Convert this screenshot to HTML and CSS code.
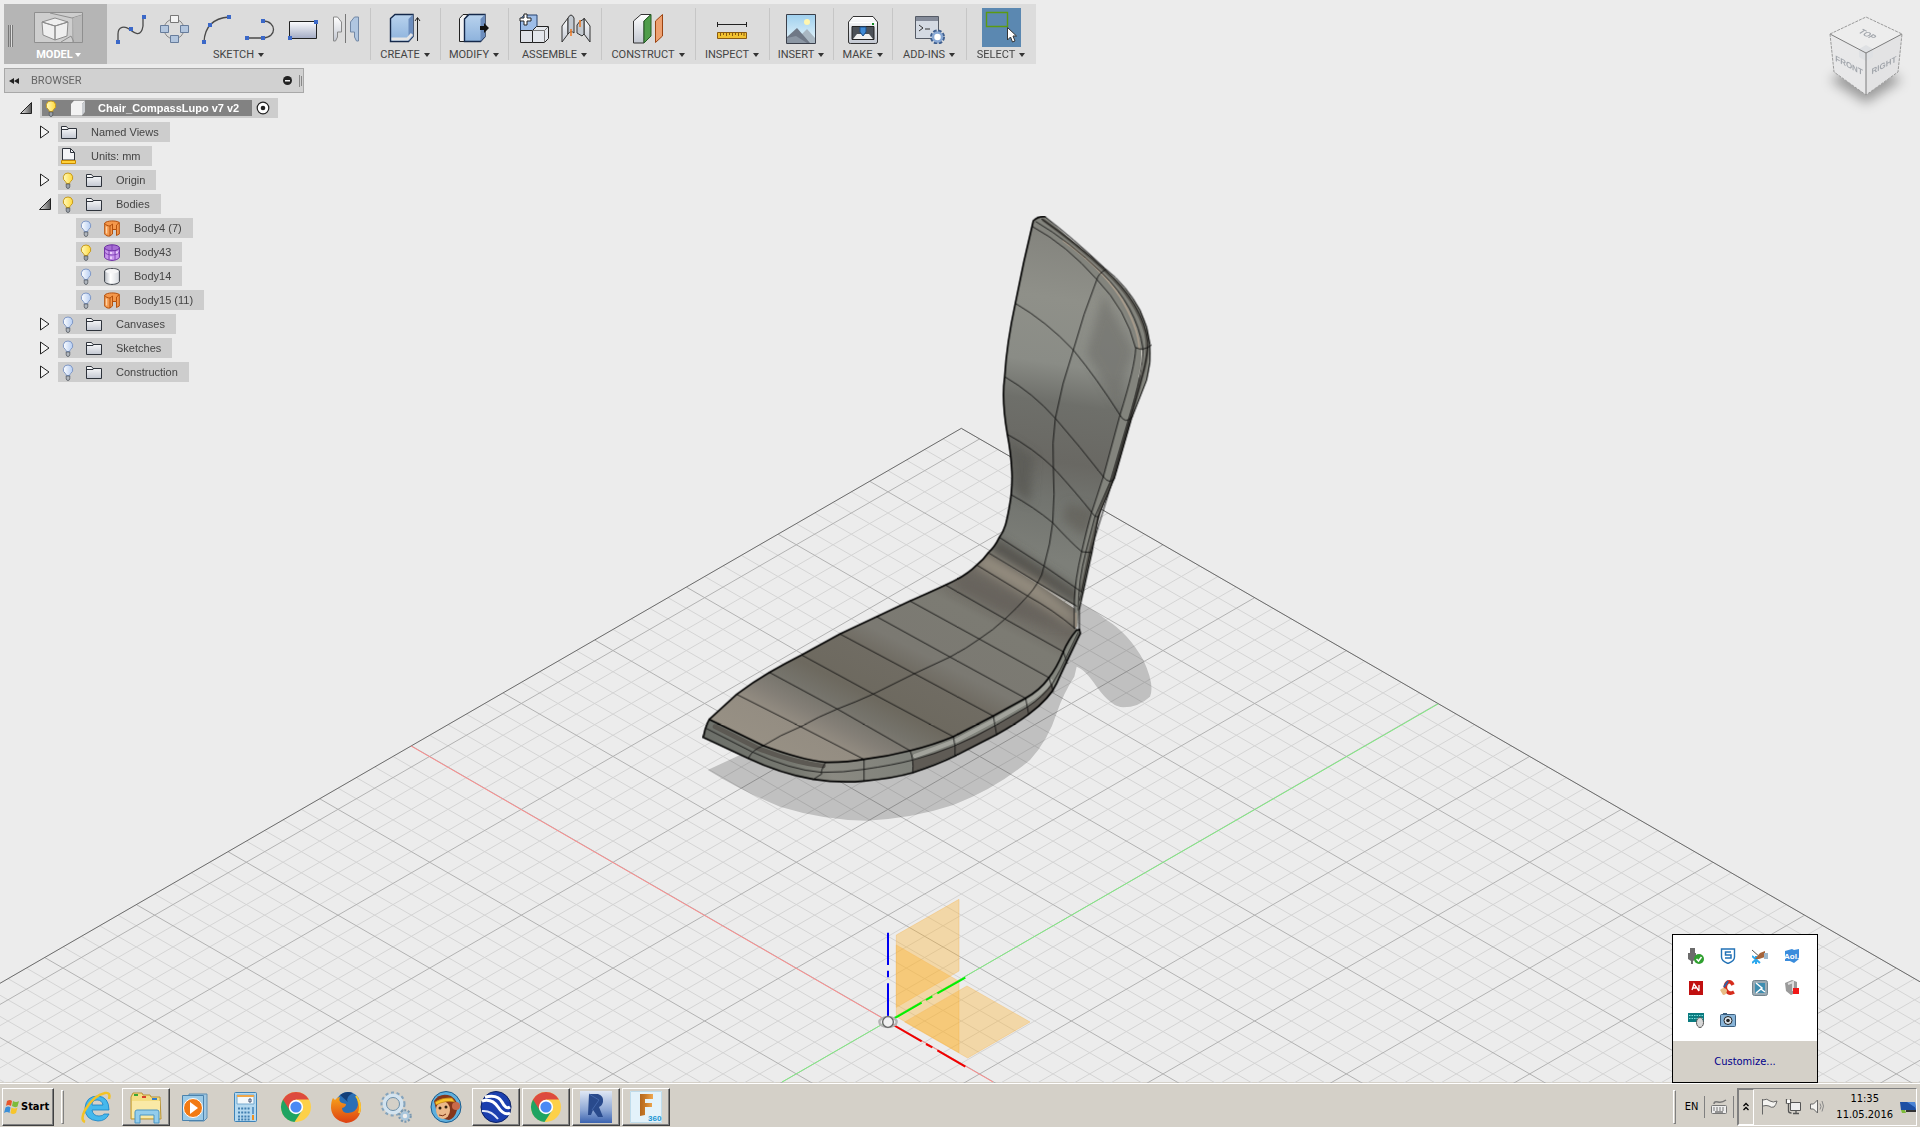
FILE: index.html
```html
<!DOCTYPE html>
<html lang="en">
<head>
<meta charset="utf-8">
<title>Chair_CompassLupo v7 v2</title>
<link rel="stylesheet" href="styles.css">
</head>
<body>
<svg class="defs" width="0" height="0" aria-hidden="true">
  <defs>
    <linearGradient id="gYellow" x1="0" x2="1"><stop offset="0" stop-color="#fffbc0"/><stop offset="1" stop-color="#ffd83a"/></linearGradient>
    <linearGradient id="gBlueBulb" x1="0" x2="1"><stop offset="0" stop-color="#ffffff"/><stop offset="1" stop-color="#b4ccf2"/></linearGradient>
    <linearGradient id="gSilver" x1="0" y1="0" x2="0" y2="1"><stop offset="0" stop-color="#ffffff"/><stop offset="1" stop-color="#c3c8d2"/></linearGradient>
    <linearGradient id="gRect" x1="0" y1="0" x2="0" y2="1"><stop offset="0" stop-color="#fdfdff"/><stop offset="1" stop-color="#a3abc4"/></linearGradient>
    <linearGradient id="gBlue" x1="0" y1="0" x2="0" y2="1"><stop offset="0" stop-color="#b9d3ee"/><stop offset="1" stop-color="#8db2dc"/></linearGradient>
    <linearGradient id="gSky" x1="0" y1="0" x2="0" y2="1"><stop offset="0" stop-color="#9fd0ee"/><stop offset="1" stop-color="#e8f6fb"/></linearGradient>
    <linearGradient id="gCyl" x1="0" x2="1"><stop offset="0" stop-color="#b9bdc4"/><stop offset=".4" stop-color="#fff"/><stop offset="1" stop-color="#d5d8dd"/></linearGradient>
    <linearGradient id="gTri" x1="0" x2="1"><stop offset="0" stop-color="#eee"/><stop offset="1" stop-color="#555"/></linearGradient>
    <linearGradient id="gFox" x1="0" y1="0" x2="0" y2="1"><stop offset="0" stop-color="#f7a21b"/><stop offset="1" stop-color="#dd3f12"/></linearGradient>
    <linearGradient id="gRevit" x1="0" y1="0" x2="0" y2="1"><stop offset="0" stop-color="#dfe7f4"/><stop offset=".6" stop-color="#8ca6d4"/><stop offset="1" stop-color="#3b63b0"/></linearGradient>
    <linearGradient id="gFus" x1="0" x2="1"><stop offset="0" stop-color="#b5681e"/><stop offset=".4" stop-color="#c87a28"/><stop offset="1" stop-color="#f0a850"/></linearGradient>
    <symbol id="bulbOn" viewBox="0 0 12 17"><path d="M6 1a4.600 4.600 0 0 0-2.600 8.500C4 10.200 4.200 10.600 4.200 11.500h3.600c0-.9.2-1.300.8-2A4.600 4.600 0 0 0 6 1z" fill="url(#gYellow)" stroke="#c79a1c"/><path d="M4.200 12h3.600v3L7 16.300H5L4.200 15z" fill="#9aa0a8" stroke="#4a5058" stroke-width=".7"/></symbol>
    <symbol id="bulbOff" viewBox="0 0 12 17"><path d="M6 1a4.600 4.600 0 0 0-2.600 8.500C4 10.200 4.200 10.600 4.200 11.500h3.600c0-.9.2-1.300.8-2A4.600 4.600 0 0 0 6 1z" fill="url(#gBlueBulb)" stroke="#7f98c6"/><path d="M4.200 12h3.600v3L7 16.300H5L4.200 15z" fill="#b0b6be" stroke="#4a5058" stroke-width=".7"/></symbol>
    <symbol id="folder" viewBox="0 0 16 14"><path d="M.5 13.500V1.500h5l1.500 2h8.500v10z" fill="url(#gSilver)" stroke="#2e333b"/><path d="M1 4.500h6l1-1" fill="none" stroke="#2e333b"/></symbol>
    <symbol id="surface" viewBox="0 0 16 17"><path d="M.7 3C3 .5 12 .2 15.300 2.500V14l-2.800 1.500V9.500H8.500V14l-2.500 2C4 16.500 1.500 15.500.7 14z" fill="#f4984c" stroke="#b4500c"/><path d="M6 16V6L8.500 4v6M12.500 9.500V5l2.800-2.500M.7 3.500C1.700 5 3.700 6 6 6" fill="none" stroke="#b4500c"/><path d="M2.500 6.500v7" stroke="#fcd0a4" stroke-width="1.500"/></symbol>
    <symbol id="tspline" viewBox="0 0 16 17"><path d="M.6 3.800v9.400C1 15 5 16.400 8 16.400s7-1.400 7.400-3.200V3.800z" fill="#c896ec" stroke="#6a2ba0"/><ellipse cx="8" cy="3.800" rx="7.400" ry="3" fill="#a76fd4" stroke="#6a2ba0"/><path d="M5 6.600v9.300M11 6.600v9.300M8 1v6M.6 8c1 2 4 3 7.400 3s6.400-1 7.400-3" fill="none" stroke="#7a3bb2" stroke-width=".9"/><path d="M7 8v2M7 12.500v2.500M13 7.500v2" stroke="#f2e0fd" stroke-width="1.500"/></symbol>
    <symbol id="cyl" viewBox="0 0 16 17"><path d="M.6 3v10.500C1 15 4 16.400 8 16.400s7-1.400 7.400-2.900V3C15 1.500 12 .6 8 .6S1 1.500.6 3z" fill="url(#gCyl)" stroke="#3a3f47"/><ellipse cx="8" cy="3.300" rx="6.600" ry="2.200" fill="#f6f6f7"/></symbol>
    <symbol id="chrome" viewBox="0 0 32 32"><circle cx="16" cy="16" r="15" fill="#fdd048"/><path d="M3 8.500A15 15 0 0 0 14.500 31L22 19.500 16 16z" fill="#1fa463"/><path d="M3 8.500A15 15 0 0 1 29 8.500H16L9.500 19z" fill="#dd4b3e"/><circle cx="16" cy="16" r="7.200" fill="#fff"/><circle cx="16" cy="16" r="5.600" fill="#4a8af4"/></symbol>
  </defs>
</svg>

<div class="app">
  <main class="workspace">
    <svg class="scene" viewBox="0 0 1920 1083" preserveAspectRatio="xMidYMid slice" role="img" aria-label="Chair model on the ground grid">
      <defs>
        <clipPath id="ground"><path id="groundShape"/></clipPath>
        <filter id="soft" x="-30%" y="-30%" width="160%" height="160%"><feGaussianBlur stdDeviation="14"/></filter>
        <filter id="softS"><feGaussianBlur stdDeviation="2"/></filter>
        <filter id="cubeBlur" x="-50%" y="-50%" width="200%" height="200%"><feGaussianBlur stdDeviation="6"/></filter>
        <linearGradient id="gBack" gradientUnits="userSpaceOnUse" x1="1140" y1="-800" x2="1000" y2="160">
          <stop offset="0" stop-color="#84847e"/><stop offset=".2" stop-color="#8f9089"/><stop offset=".4" stop-color="#8a8c86"/><stop offset=".52" stop-color="#6e6f6a"/><stop offset=".7" stop-color="#696863"/><stop offset=".82" stop-color="#72746f"/><stop offset="1" stop-color="#7d7f79"/>
        </linearGradient>
        <linearGradient id="gSeat" gradientUnits="userSpaceOnUse" x1="88" y1="658" x2="444" y2="-36">
          <stop offset="0" stop-color="#979084"/><stop offset=".13" stop-color="#948d82"/><stop offset=".2" stop-color="#847f77"/><stop offset=".28" stop-color="#75736b"/><stop offset=".36" stop-color="#6d695f"/><stop offset=".52" stop-color="#706c63"/><stop offset=".6" stop-color="#7b7972"/><stop offset=".82" stop-color="#7c7b73"/><stop offset=".92" stop-color="#6c6861"/><stop offset="1" stop-color="#6c6861"/>
        </linearGradient>
        <linearGradient id="gRim" gradientUnits="userSpaceOnUse" x1="80" y1="700" x2="1190" y2="450">
          <stop offset="0" stop-color="#6d706a"/><stop offset=".2" stop-color="#767870"/><stop offset=".3" stop-color="#8b8a82"/><stop offset=".5" stop-color="#7f817a"/><stop offset="1" stop-color="#85877f"/>
        </linearGradient>
        <clipPath id="chairClip"><path d="M1060-838Q1030-715 1006-590Q980-470 974-370Q964-300 982-197Q995-130 996-70Q996-20 988 20C980 65 975 90 958 112Q945 140 925 158Q910 180 890 195C860 225 830 240 800 253C760 272 730 285 690 303L590 350L480 402L365 465Q320 488 268 517Q220 545 170 583L88 658L552 778L1000 620L1185 385L1198 330L1236 158L1255 50L1305-70L1355-245L1400-360Q1430-470 1380-570Q1340-640 1275-690L1095-850z"/></clipPath>
      </defs>
      <g clip-path="url(#ground)" fill="none">
        <path id="minor" stroke="#d4d4d4"/>
        <path id="major" stroke="#b2b2b2"/>
      </g>
      <path id="groundEdge" fill="none" stroke="#6c6c6c"/>
      <path d="M411 746 993 1082" stroke="#ff8c8c" fill="none"/>
      <path d="M1438 704 782 1082" stroke="#80ee80" fill="none"/>

      <g transform="translate(680 500) scale(.33333)" fill="none" stroke="#0c0c0c" stroke-width="3" stroke-linejoin="round" stroke-linecap="round">
        <path filter="url(#softS)" fill="#000" fill-opacity=".19" stroke="none" d="M83 810Q190 876 300 920Q430 960 560 962Q700 955 820 915Q950 865 1050 780Q1105 720 1130 640Q1150 580 1183 530L1190 500Q1215 508 1250 560Q1295 622 1330 622Q1375 622 1410 590Q1425 555 1390 480Q1345 400 1280 360Q1250 335 1205 312L900 500L180 765z"/>
        <!-- seat rim -->
        <path fill="url(#gRim)" stroke="none" d="M88 658Q75 680 70 712L205 775Q300 820 400 838Q480 850 552 843Q640 835 698 818Q770 795 825 768L948 705Q1010 670 1046 643Q1110 595 1130 550Q1150 505 1201 400L1190 385L900 600L500 720z"/>
        <path stroke="#5c5953" stroke-width="14" d="M105 680L240 748Q350 790 430 798"/>
        <path stroke="#a2a39c" stroke-width="12" d="M705 768Q770 745 828 722L945 660L1040 606Q1085 580 1112 542"/>
        <path fill="#5f5b55" stroke="none" d="M698 782L698 816Q830 770 948 703Q1085 630 1120 570L1118 550Q1080 595 1043 620L948 675L822 738z"/>
        <!-- seat and back surface -->
        <path fill="url(#gSeat)" stroke="none" d="M88 658L170 583Q220 545 268 517Q320 488 365 465L480 402L590 350L690 303L800 253C830 240 860 225 890 195L925 158L1190 330L1187 388Q1165 420 1150 455Q1130 505 1105 535Q1080 570 1035 595L940 648L820 710Q760 735 690 752Q620 770 552 778Q500 788 435 787Q360 778 250 737z"/>
        <path fill="url(#gBack)" stroke="none" d="M1060-838Q1030-715 1006-590Q980-470 974-370Q964-300 982-197Q995-130 996-70Q996-20 988 20C980 65 975 90 958 112Q945 140 925 158L1185 318L1198 330L1210 280L1236 158L1255 50L1305-70L1355-245L1400-360Q1430-470 1380-570Q1340-640 1275-690L1095-850Q1075-852 1060-838z"/>
        <g clip-path="url(#chairClip)"><g stroke="none" filter="url(#soft)">
          <path fill="#57544f" d="M950 110L1090 200L1200 275V320L1075 245L925 150z"/>
          <path fill="#938b7e" d="M915 158L1075 250L1180 340L1185 378L1043 288L880 192z"/>
          <path fill="#68645d" d="M850 220L1000 290L1160 375L1100 370L960 330L820 260z"/>
          <path fill="#5d5d58" d="M985-180L1060-130L1050 10L1000-30z"/>
          <path fill="#6e6e69" d="M1270-620L1360-450L1310-290L1220-440z" opacity=".6"/>
          <path fill="#62605a" d="M1160 10L1250 30L1215 110L1150 60z" opacity=".7"/>
        </g></g>
        <!-- back rim -->
        <path fill="#83847d" stroke="none" d="M1060-838L1140-770L1250-662Q1370-540 1367-440Q1350-360 1320-255L1270-70L1240 20L1205 155Q1183 250 1183 385L1192 380L1205 280L1236 158L1255 50L1305-70L1355-245L1400-360Q1430-470 1380-570Q1340-640 1275-690L1095-850z"/>
        <path stroke="#55534d" stroke-width="8" d="M1090-840Q1200-760 1275-688Q1370-600 1397-500Q1410-440 1385-370L1350-243L1299-66L1259 35L1230 150L1205 270"/>
        <path stroke="#ad9f8e" stroke-width="5" d="M1150-778Q1260-700 1320-610Q1375-520 1378-455M1187 340V380"/>
        <path stroke="#e2dfd6" stroke-width="4" d="M1386-448Q1387-400 1378-370"/>
        <!-- mesh -->
        <path stroke-width="2.500" d="M170 583L362 680L552 778M268 517L472 627L690 752M365 465L580 582L820 710M480 402L703 521L940 648M590 350L810 471L1037 595M690 303L898 417L1107 533M800 257L975 357L1150 455M890 195L1043 288Q1120 330 1185 385M925 158L1073 248L1190 318M958 112L1092 198L1208 278M995-15Q1060 20 1118 68Q1170 125 1205 155L1236 158
          M1006-590Q1100-535 1180-450Q1250-365 1320-255Q1335-225 1358-250M974-370Q1060-320 1126-245Q1200-160 1270-70Q1288-45 1305-65M982-197Q1060-155 1120-97Q1190-20 1235 37Q1245 53 1255 50
          M250 737Q300 705 362 680Q415 650 472 627Q530 605 580 582L703 521L810 471Q860 445 898 417Q940 390 975 357Q1010 325 1043 288Q1060 270 1073 248Q1088 225 1092 198Q1112 130 1118 68Q1125-20 1120-97Q1115-170 1126-245Q1145-350 1180-450Q1210-560 1250-660Q1255-680 1275-690"/>
        <path stroke-width="2.500" d="M1058-820Q1160-765 1250-662Q1340-570 1367-455Q1365-400 1320-255L1270-70L1235 37Q1222 80 1205 155Q1185 240 1183 300V385
          M1068-835Q1170-775 1265-682Q1370-580 1389-455Q1390-385 1345-240L1290-53L1245 50L1218 155Q1195 240 1195 330
          M1085-843Q1190-770 1270-695Q1390-590 1405-470Q1400-400 1350-240L1300-65L1232 155L1200 300
          M1367-457Q1390-445 1415-465"/>
        <path stroke-width="2.500" d="M78 685L215 755Q330 810 425 817Q490 818 552 808Q640 795 698 780Q765 762 822 738Q890 710 948 675L1043 620Q1090 590 1118 550Q1145 505 1160 470L1195 397M250 737Q215 750 205 775M437 787Q420 815 425 822L400 838M552 778V843M690 752Q702 775 698 818M820 710Q828 740 825 768M940 648L950 705M1037 595L1046 643M1107 533L1120 575M1150 455L1162 490"/>
        <path stroke="#000" stroke-width="5" d="M88 658L250 737Q360 778 435 787Q500 788 552 778Q620 770 690 752Q760 735 820 710L940 648L1035 595Q1080 570 1105 535Q1130 505 1150 455Q1165 420 1190 390H1198"/>
        <path stroke="#000" stroke-width="5" d="M1095-850Q1075-852 1060-838Q1030-715 1006-590Q980-470 974-370Q964-300 982-197Q995-130 996-70Q996-20 988 20C980 65 975 90 958 112Q945 140 925 158Q910 180 890 195C860 225 830 240 800 253C760 272 730 285 690 303L590 350L480 402L365 465Q320 488 268 517Q220 545 170 583L88 658Q75 680 70 712L205 775Q300 820 400 838Q480 850 552 843Q640 835 698 818Q770 795 825 768L948 705Q1010 670 1046 643Q1110 595 1130 550Q1150 505 1201 400L1198 388"/>
        <path stroke-width="3" d="M1198 388V330L1236 158L1255 50L1305-70L1355-245L1400-360Q1430-470 1380-570Q1340-645 1275-695Q1180-785 1095-850"/>
      </g>

      <g transform="translate(860 880) scale(.33333)">
        <g fill="#ffae1a" fill-opacity=".33" stroke="#f5b95a" stroke-opacity=".6" stroke-width="2">
          <path d="M109 165 297 58V273L109 382z"/><path d="M109 195 297 304V518L109 410z"/><path d="M134 426 321 318 510 426 323 534z"/>
        </g>
        <g fill="none" stroke-width="6">
          <path stroke="#0000f0" d="M84 158v97M84 272v20M84 310v100"/>
          <path stroke="#00f000" d="M100 417 185 368M198 360l19-11M232 340l84-47"/>
          <path stroke="#f00000" d="M100 435l85 49M198 492l19 10M232 511l84 49"/>
        </g>
        <ellipse cx="84" cy="426" rx="26" ry="15" fill="none" stroke="#b4b4b4" stroke-width="7"/>
        <circle cx="84" cy="426" r="16" fill="#f1f1f1" stroke="#666" stroke-width="4"/>
      </g>
    </svg>

    <div class="overlay">
      <nav class="toolbar" aria-label="Tools">
        <button class="tool model">
          <svg class="grip" width="6" height="22" viewBox="0 0 6 22"><path d="M.5 0v22M2.500 0v22M4.500 0v22" stroke="#777"/><path d="M3.500 0v22" stroke="#ddd"/></svg>
          <span class="icons"><svg width="49" height="31" viewBox="0 0 49 31"><path d="M.5.5h48v30H.5z" fill="#cecece" stroke="#8f8f8f"/><path d="M16 1l22 5 10-3M39 6v24M27 30l10-6 3 6" fill="none" stroke="#8f8f8f"/><path d="M39 6l9-3v27h-8z" fill="#b9b9b9"/><path d="M8 10 21 14V28L9 23zM21 14 34 10 33 24 21 28zM8 10 21 6 34 10 21 14z" fill="#efefef" stroke="#8c8c8c"/></svg></span>
          <span class="label">MODEL<i class="caret"></i></span>
        </button>
        <button class="tool">
          <span class="icons wide">
            <svg width="32" height="32" viewBox="0 0 32 32"><path d="M3 30V22C3 14 10 14 14 17s12 10 14-3V5" fill="none" stroke="#4a4a4a" stroke-width="1.300"/><path d="M1 28h4v4H1zM14 15h4v4h-4zM27 3h4v4h-4z" fill="#3b68c8"/></svg>
            <svg width="32" height="32" viewBox="0 0 32 32"><circle cx="16" cy="17" r="10" fill="none" stroke="#888"/><g fill="#b3c6de" stroke="#677c9b"><path d="M12.500 23.500h8v7h-8z"/><path d="M2.500 13.500h8v7h-8z"/><path d="M22.500 13.500h8v7h-8z"/></g><path d="M12.500 3.500h8v7h-8z" fill="#f3f3f3" stroke="#777"/></svg>
            <svg width="32" height="32" viewBox="0 0 32 32"><path d="M3 30Q4 7 28 5" fill="none" stroke="#4a4a4a" stroke-width="1.300"/><path d="M1 28h4v4H1zM7 11h4v4H7zM26 3h4v4h-4z" fill="#3b68c8"/></svg>
            <svg width="32" height="32" viewBox="0 0 32 32"><path d="M3 26h16C33 26 33 9 19 9" fill="none" stroke="#4a4a4a" stroke-width="1.300"/><path d="M1 24h4v4H1zM17 24h4v4h-4zM17 7h4v4h-4z" fill="#3b68c8"/></svg>
            <svg width="32" height="32" viewBox="0 0 32 32"><path d="M2.500 9.500h27v17h-27z" fill="url(#gRect)" stroke="#222"/><path d="M1 24h4v4H1zM27 8h4v4h-4z" fill="#3b68c8"/></svg>
            <svg width="32" height="32" viewBox="0 0 32 32"><path d="M3.500 5h4l4 5v10h-4v5l-2 4h-2z" fill="url(#gSilver)" stroke="#888"/><path d="M28.500 5h-4l-4 5v10h4v5l2 4h2z" fill="#b0c6e0" stroke="#7288a6"/><path d="M15.500 2v29" stroke="#777"/></svg>
          </span>
          <span class="label">SKETCH<i class="caret"></i></span>
        </button>
        <button class="tool">
          <span class="icons"><svg width="32" height="32" viewBox="0 0 32 32"><path d="M1.500 6.500 6 2.500h18v22l-4.500 5h-18z" fill="url(#gBlue)" stroke="#14284a" stroke-width="1.400"/><path d="M19.500 7 24 2.500v22l-4.500 5z" fill="#6c8dbd"/><path d="M2.500 27h16l4.500-5" fill="none" stroke="#e5e5e5" stroke-width="3"/><path d="M28.500 29V6M26 9l2.500-3.500L31 9" fill="none" stroke="#222"/></svg></span>
          <span class="label">CREATE<i class="caret"></i></span>
        </button>
        <button class="tool">
          <span class="icons"><svg width="32" height="32" viewBox="0 0 32 32"><path d="M1.500 6.500 5 2.500h5L6.500 7v22.500h-5z" fill="#f2f2f2" stroke="#222"/><path d="M6.500 7 11 2.500h16v22l-4.500 5h-16z" fill="url(#gBlue)" stroke="#14284a" stroke-width="1.400"/><path d="M22.500 7 27 2.500v22l-4.500 5z" fill="#6c8dbd"/><path d="M22 14h4v-3l5 5-5 5v-3h-4z" fill="#111"/></svg></span>
          <span class="label">MODIFY<i class="caret"></i></span>
        </button>
        <button class="tool">
          <span class="icons double">
            <svg width="32" height="32" viewBox="0 0 32 32"><path d="M2.500 7 6 3h13v12l-3 4H2.500z" fill="#9dbde8" stroke="#24406e"/><path d="M2.500 18.500h12v12h-12z" fill="#dfe2e8" stroke="#222"/><path d="M14.500 18.500l4-4h12v12l-4 4h-12z" fill="#e4e7ec" stroke="#222"/><path d="M14.500 18.500h12v12M26.500 18.500l4-4" fill="none" stroke="#777"/><path d="M6 2h3v4h4v3H9v4H6V9H2V6h4z" fill="#fff" stroke="#222"/></svg>
            <svg width="32" height="32" viewBox="0 0 32 32"><path d="M2 14 8 6v16l-6 8zM30 14l-6-8v16l6 8z" fill="url(#gSilver)" stroke="#333"/><path d="M8 6q3-6 6 0v15q-3-3-6 1zM24 7q-5 2-7 6v8l5 3 2-2z" fill="#c3c9d0" stroke="#333"/><path d="M11 17v7M20 8v7" stroke="#f07820" stroke-width="1.500"/></svg>
          </span>
          <span class="label">ASSEMBLE<i class="caret"></i></span>
        </button>
        <button class="tool">
          <span class="icons"><svg width="32" height="32" viewBox="0 0 32 32"><path d="M1.500 9 9 2.500h10L12 9v22H1.500z" fill="url(#gSilver)" stroke="#333"/><path d="M12 9 19 2.500V24l-7 7z" fill="#4f9d4a" stroke="#235c22"/><path d="M23.500 9l7-6.500V24l-7 6.500z" fill="#eda070" stroke="#9c4310"/></svg></span>
          <span class="label">CONSTRUCT<i class="caret"></i></span>
        </button>
        <button class="tool">
          <span class="icons"><svg width="32" height="32" viewBox="0 0 32 32"><path d="M2 12.500h28M1.500 10v5M30.500 10v5" stroke="#222"/><path d="M1.500 20.500h29v6h-29z" fill="#f2c230" stroke="#8a5a10"/><path d="M4.500 21v3M7.500 21v2M10.500 21v3M13.500 21v2M16.500 21v3M19.500 21v2M22.500 21v3M25.500 21v2M28 21v3" stroke="#8a5a10"/></svg></span>
          <span class="label">INSPECT<i class="caret"></i></span>
        </button>
        <button class="tool">
          <span class="icons"><svg width="32" height="32" viewBox="0 0 32 32"><path d="M1.500 2.500h29v29h-29z" fill="url(#gSky)"/><path d="M13 26l9-9 8 9v5H13z" fill="#a9b7c2"/><path d="M2 25 12 16l13 15H2z" fill="#6f7886"/><path d="M2 31v-5l9-2 11 7z" fill="#8b96a3"/><circle cx="22" cy="10" r="3" fill="#fff6b0"/><path d="M1.500 2.500h29v29h-29z" fill="none" stroke="#3a3f4a"/></svg></span>
          <span class="label">INSERT<i class="caret"></i></span>
        </button>
        <button class="tool">
          <span class="icons"><svg width="32" height="32" viewBox="0 0 32 32"><path d="M1.500 10 6 4.500h20l4.500 5.500v20q0 1.500-2 1.500H3.500q-2 0-2-1.500z" fill="url(#gSilver)" stroke="#333"/><path d="M2 10.500h28" stroke="#fff"/><path d="M5 14.500h22v13H5z" fill="#4c5158" stroke="#222"/><path d="M6 27l4-5h12l4 5z" fill="#f0f0f0"/><path d="M13 15h6v5l-3 4-3-4z" fill="#3f8ad6" stroke="#1d4e88"/><path d="M25 11h2v2h-2z" fill="#128a22"/></svg></span>
          <span class="label">MAKE<i class="caret"></i></span>
        </button>
        <button class="tool">
          <span class="icons"><svg width="32" height="32" viewBox="0 0 32 32"><path d="M2.500 4.500h23v22h-23z" fill="#d4dae3" stroke="#555b66"/><path d="M3 5h22v4H3z" fill="#848b99"/><path d="M6 13l4 3-4 3M12 17h5" fill="none" stroke="#333"/><circle cx="24.500" cy="25" r="5.500" fill="none" stroke="#3f5f8f" stroke-width="4" stroke-dasharray="3 1.300"/><circle cx="24.500" cy="25" r="4.500" fill="#fff" stroke="#88a8d4" stroke-width="2.500"/></svg></span>
          <span class="label">ADD-INS<i class="caret"></i></span>
        </button>
        <button class="tool">
          <span class="icons"><svg class="pressed" width="39" height="39" viewBox="0 0 39 39"><path d="M4.500 4.500h21v14h-21z" fill="none" stroke="#5c9a12" stroke-width="1.400"/><path d="M25.500 19.500v12.500l3-3 2 5 2.500-1-2-5h3.500z" fill="#fff" stroke="#333"/></svg></span>
          <span class="label">SELECT<i class="caret"></i></span>
        </button>
      </nav>

      <aside class="browser">
        <header class="browser-head">
          <svg width="10" height="6" viewBox="0 0 10 6"><path d="M5 0v6L0 3zM10 0v6L5 3z" fill="#222"/></svg>
          <h2>BROWSER</h2>
          <svg width="9" height="9" viewBox="0 0 9 9"><circle cx="4.500" cy="4.500" r="4.500" fill="#222"/><path d="M2 4h5v1.500H2z" fill="#eee"/></svg>
          <svg width="3" height="12" viewBox="0 0 3 12"><path d="M.5 0v12M2.500 1v10" stroke="#888"/></svg>
        </header>
        <ul class="tree">
          <li class="row root"><svg class="twist" width="12" height="12"><path d="M.5 11.500 11.500.5v11z" fill="url(#gTri)" stroke="#222"/></svg><span class="chip"><span class="picked"><svg width="14" height="17"><use href="#bulbOn"/></svg><svg width="16" height="16" viewBox="0 0 16 16"><path d="M1 4 4 .7h11L12 4v11.500H1z" fill="#f2f2f2"/><path d="M12 4l3-3.300V12l-3 3.500z" fill="#c9ccd0"/></svg><b>Chair_CompassLupo v7 v2</b></span><svg width="14" height="14" viewBox="0 0 14 14"><circle cx="7" cy="7" r="5.800" fill="#fff" stroke="#222" stroke-width="1.200"/><circle cx="7" cy="7" r="2.300" fill="#222"/></svg></span></li>
          <li class="row lv1"><svg class="twist" width="12" height="14"><path d="M1.500 1v12L10 7z" fill="#f4f4f4" stroke="#222"/></svg><span class="chip"><svg width="16" height="14"><use href="#folder"/></svg>Named Views</span></li>
          <li class="row lv1"><i class="twist"></i><span class="chip"><svg width="16" height="16" viewBox="0 0 16 16"><path d="M1.500 12V.5h8l4 4V12z" fill="#f4f5f7" stroke="#2e333b"/><path d="M9.500.5v4h4" fill="none" stroke="#2e333b"/><path d="M.5 12.500h14v3H.5z" fill="#ffd23c" stroke="#c88a00"/></svg>Units: mm</span></li>
          <li class="row lv1"><svg class="twist" width="12" height="14"><path d="M1.500 1v12L10 7z" fill="#f4f4f4" stroke="#222"/></svg><span class="chip"><svg width="14" height="17"><use href="#bulbOn"/></svg><svg width="16" height="14"><use href="#folder"/></svg>Origin</span></li>
          <li class="row lv1"><svg class="twist" width="12" height="12"><path d="M.5 11.500 11.500.5v11z" fill="url(#gTri)" stroke="#222"/></svg><span class="chip"><svg width="14" height="17"><use href="#bulbOn"/></svg><svg width="16" height="14"><use href="#folder"/></svg>Bodies</span></li>
          <li class="row lv2"><i class="twist"></i><span class="chip"><svg width="14" height="17"><use href="#bulbOff"/></svg><svg width="16" height="17"><use href="#surface"/></svg>Body4 (7)</span></li>
          <li class="row lv2"><i class="twist"></i><span class="chip"><svg width="14" height="17"><use href="#bulbOn"/></svg><svg width="16" height="17"><use href="#tspline"/></svg>Body43</span></li>
          <li class="row lv2"><i class="twist"></i><span class="chip"><svg width="14" height="17"><use href="#bulbOff"/></svg><svg width="16" height="17"><use href="#cyl"/></svg>Body14</span></li>
          <li class="row lv2"><i class="twist"></i><span class="chip"><svg width="14" height="17"><use href="#bulbOff"/></svg><svg width="16" height="17"><use href="#surface"/></svg>Body15 (11)</span></li>
          <li class="row lv1"><svg class="twist" width="12" height="14"><path d="M1.500 1v12L10 7z" fill="#f4f4f4" stroke="#222"/></svg><span class="chip"><svg width="14" height="17"><use href="#bulbOff"/></svg><svg width="16" height="14"><use href="#folder"/></svg>Canvases</span></li>
          <li class="row lv1"><svg class="twist" width="12" height="14"><path d="M1.500 1v12L10 7z" fill="#f4f4f4" stroke="#222"/></svg><span class="chip"><svg width="14" height="17"><use href="#bulbOff"/></svg><svg width="16" height="14"><use href="#folder"/></svg>Sketches</span></li>
          <li class="row lv1"><svg class="twist" width="12" height="14"><path d="M1.500 1v12L10 7z" fill="#f4f4f4" stroke="#222"/></svg><span class="chip"><svg width="14" height="17"><use href="#bulbOff"/></svg><svg width="16" height="14"><use href="#folder"/></svg>Construction</span></li>
        </ul>
      </aside>
    </div>

    <svg class="cube" width="120" height="120" viewBox="0 0 120 120" role="img" aria-label="View cube">
      <path d="M66 103 30 80 66 60 102 80z" fill="#000" fill-opacity=".34" filter="url(#cubeBlur)"/>
      <path d="M66 17 102 34 98 72 66 95 34 72 30 34z" fill="#ededed"/>
      <path d="M30 34 66 53V95L34 72z" fill="#e8e8e9"/><path d="M102 34 66 53V95L98 72z" fill="#e3e3e4"/>
      <path d="M66 45l7 4v8l-7 4-7-4v-8z" fill="#dfe1e4"/>
      <path d="M30 34 66 53 102 34M66 53V95" fill="none" stroke="#7c7c7c"/>
      <path d="M30 34 66 17l36 17-4 38-32 23-32-23z" fill="none" stroke="#999" stroke-dasharray="3 1"/>
      <g class="face" text-anchor="middle"><text transform="translate(49 68) skewY(28)">FRONT</text><text transform="translate(84 68) skewY(-28)">RIGHT</text><text transform="translate(65 36) rotate(28) skewX(-28)">TOP</text></g>
    </svg>

    <section class="flyout" aria-label="Hidden icons">
      <div class="flyout-icons">
        <svg viewBox="0 0 16 16"><path d="M2 0h5v5h1v6l-3 2v3H3v-3l-3-2V5h2z" fill="#6b6b6b"/><circle cx="11" cy="11" r="5" fill="#2fa02f"/><path d="M8.500 11l2 2 3-4" fill="none" stroke="#fff" stroke-width="1.500"/></svg>
        <svg viewBox="0 0 16 16"><path d="M1.500 1h13v8q0 4-6.500 6.500Q1.500 13 1.500 9z" fill="#fff" stroke="#2272b6" stroke-width="1.400"/><path d="M11 4H5.500v3H11v3H5" fill="none" stroke="#2272b6" stroke-width="1.500"/></svg>
        <svg viewBox="0 0 16 16"><path d="M0 8l8 7M8 8l-8 7M4 8v8" stroke="#2ba8ee" stroke-width="2"/><path d="M0 2l9 8" stroke="#555"/><path d="M3 11l5-6 5-2v6l-6 2z" fill="#a5643a"/><path d="M12 5h4v6h-4z" fill="#9db8cc"/></svg>
        <svg viewBox="0 0 16 16"><path d="M1 3l7-2 2 1 5-1v10l-5 4-4-2-5 0z" fill="#3a8cdc"/><text x="0" y="11" class="aol">Aol.</text></svg>
        <svg viewBox="0 0 16 16"><path d="M1 1h14v14H1z" fill="#c11010"/><path d="M4 10l2-6 5 7M11 5v6M5 8h3" fill="none" stroke="#fff" stroke-width="1.300"/></svg>
        <svg viewBox="0 0 16 16"><path d="M13 5Q11 1 8 2 4 5 6 10q3 5 8 2" fill="none" stroke="#d62c1c" stroke-width="3.500"/><path d="M4 7l4-6" stroke="#2d62a8" stroke-width="2"/><path d="M0 10q4-4 7 0 0 5-4 5z" fill="#e8bd86"/></svg>
        <svg viewBox="0 0 16 16"><rect x=".5" y=".5" width="15" height="15" rx="2" fill="#9aaab3" stroke="#73838c"/><path d="M3 3h10v10H3z" fill="#3e8db0"/><path d="M4 3l6 5-6 5M9 9l4 3" fill="none" stroke="#fff" stroke-width="1.500"/></svg>
        <svg viewBox="0 0 16 16"><path d="M1 3l7-3 5 2v10l-6 3-5-4z" fill="#9a9a9a"/><path d="M4 4l5-2v9" fill="none" stroke="#ddd" stroke-width="2"/><path d="M9 8h6v6H9z" fill="#f01818"/></svg>
        <svg viewBox="0 0 16 16"><path d="M0 1h16v9H0z" fill="#0b7b80"/><path d="M1 3.500h14M1 6.500h14" stroke="#7de0dc" stroke-dasharray="1.500 1"/><ellipse cx="12" cy="10.500" rx="3.500" ry="5" fill="#d8d8d8" stroke="#555"/></svg>
        <svg viewBox="0 0 16 16"><rect x=".5" y="2.500" width="15" height="12" rx="1" fill="#88b4d8" stroke="#3b5f80"/><path d="M3 1h4v2H3z" fill="#3b5f80"/><circle cx="8" cy="8.500" r="4" fill="#dfe7ee" stroke="#222"/><circle cx="8" cy="8.500" r="1.800" fill="#222"/></svg>
      </div>
      <a class="customize" href="#customize">Customize...</a>
    </section>
  </main>

  <footer class="taskbar">
    <button class="start"><svg width="16" height="18" viewBox="0 0 16 18"><path d="M3 3q3-2 5 0L7 8Q4 6 2 8z" fill="#e8562a"/><path d="M9 3q3 2 6 0l-1.500 5.500Q11 10 8 8z" fill="#7dbb3a"/><path d="M1.500 9.500q3-2 5 0L5.500 15Q3 13 0 15z" fill="#3a8fd8"/><path d="M7.500 9.500q3 2 6 0L12 15q-3 2-5.500 0z" fill="#f7c52c"/></svg>Start</button>
    <i class="divider"></i>
    <div class="tasks">
      <button class="task" aria-label="Internet Explorer"><svg viewBox="0 0 32 34"><path d="M29 20H12q1 6 7 6 4 0 5-2h5q-3 7-11 7Q5 30 5 18 6 6 18 6q11 1 11 14zM12 15h11q-1-5-6-5t-5 5z" fill="#45b8ec" stroke="#1580c4" stroke-width=".8"/><path d="M5 32Q0 30 5 20 14 5 25 3q6-1 4 6" fill="none" stroke="#f3c327" stroke-width="2.500"/></svg></button>
      <button class="task open" aria-label="Explorer"><svg viewBox="0 0 32 34"><path d="M1 7 3 3h9l1 2h7l1 2h9l1 22H1z" fill="#f4dd82" stroke="#b99335"/><path d="M2 11h28v17H2z" fill="#fae9a6"/><path d="M4 4h4v2H4z" fill="#3aa636"/><path d="M12 6h4v2h-4z" fill="#d8402c"/><path d="M22 8h5v2h-5z" fill="#357ecb"/><path d="M5 33V22q0-2 2-2h20q2 0 2 2v11h-5v-8H10v8z" fill="#93cdec" stroke="#4b95c4"/></svg></button>
      <button class="task" aria-label="Media Player"><svg viewBox="0 0 32 34"><path d="M9 4h18v24l-3 3H9z" fill="#9fc7e2" stroke="#5c8fb5"/><path d="M2.500 5.500h21v25h-21z" fill="#9ccbe8" stroke="#4a82ad"/><circle cx="13" cy="18" r="9.500" fill="#f27a13" stroke="#fff"/><path d="M10 12v12l8-6z" fill="#fff"/></svg></button>
      <button class="task" aria-label="Calculator"><svg viewBox="0 0 32 34"><rect x="4.500" y="2.500" width="22" height="29" rx="1" fill="#b5d9f0" stroke="#3d83b8"/><path d="M7 5h17v9H7z" fill="#f3f8fb" stroke="#76aace"/><path d="M7 5h17v2H7z" fill="#f0a648"/><path d="M19 9h2v3h-2z" fill="none" stroke="#457"/><path d="M8 18.500h12v0M8 22.500h12M8 26.500h12M8 29.500h12" stroke="#417fb0" stroke-width="2" stroke-dasharray="2 1.200"/><path d="M22 17h2v7h-2z" fill="#6299c6"/><path d="M22 25h2v5h-2z" fill="#f09020"/></svg></button>
      <button class="task" aria-label="Chrome"><svg viewBox="0 0 32 34"><use href="#chrome" width="32" height="34"/></svg></button>
      <button class="task" aria-label="Firefox"><svg viewBox="0 0 32 34"><circle cx="18" cy="14" r="12" fill="#2b6fb5"/><path d="M10 5q6-5 13-2-8 4-5 9" fill="#143f78"/><path d="M3 8l2 2q2-3 5-3-2 4 2 6l4 1q0 3-4 4 0 5 6 5 9-1 10-8l-1-8q4 3 4 12-2 13-15 14Q2 30 1 18 1 11 3 8z" fill="url(#gFox)"/><path d="M26 6q6 8 3 17" fill="none" stroke="#fbc92e" stroke-width="2"/></svg></button>
      <button class="task" aria-label="Settings"><svg viewBox="0 0 32 34"><circle cx="13" cy="14" r="11" fill="none" stroke="#86a4bc" stroke-width="3" stroke-dasharray="3 2.500"/><circle cx="13" cy="14" r="8.500" fill="none" stroke="#d3e3ef" stroke-width="4"/><circle cx="13" cy="14" r="6.500" fill="none" stroke="#6c8faa"/><circle cx="25" cy="26" r="5.500" fill="none" stroke="#7897b0" stroke-width="2.500" stroke-dasharray="2 1.500"/><circle cx="25" cy="26" r="3.500" fill="#eee" stroke="#a9c6dc" stroke-width="2.500"/></svg></button>
      <button class="task" aria-label="DVD player"><svg viewBox="0 0 32 34"><ellipse cx="16" cy="17" rx="15" ry="15.500" fill="#5fb0de" stroke="#1b5c8e"/><path d="M4 11q6-9 17-5 8 5 6 14-2 8-8 10-8-1-12-7z" fill="#85361b"/><ellipse cx="13" cy="20" rx="7" ry="9" fill="#ecb98b"/><circle cx="26" cy="16" r="4" fill="#c96a4a"/><path d="M5 12q8-5 17-4l3 4q-10-2-19 3z" fill="#f7c22c" stroke="#b5720e" stroke-width=".6"/><circle cx="10" cy="18" r="1.500" fill="#321"/><circle cx="16" cy="17" r="1.500" fill="#321"/><path d="M9 25q4 2 7-1" fill="none" stroke="#7a3215"/></svg></button>
      <button class="task open" aria-label="Google Earth"><svg viewBox="0 0 32 34"><ellipse cx="16" cy="17" rx="15" ry="15.500" fill="#1b3fae" stroke="#0c2265"/><path d="M2 11q10-3 16 6t12 6M5 7q13-3 17 5t8 5" fill="none" stroke="#fff" stroke-width="3"/><path d="M2 21q9-1 16 8" fill="none" stroke="#dfe6fa" stroke-width="2"/></svg></button>
      <button class="task open" aria-label="Chrome window"><svg viewBox="0 0 32 34"><use href="#chrome" width="32" height="34"/></svg></button>
      <button class="task open" aria-label="Revit"><svg viewBox="0 0 32 34"><path d="M0 1h32v32H0z" fill="url(#gRevit)"/><path d="M9 4h9q6 2 5 8-1 4-4 5l4 10h-5l-5-7-2 5H8z" fill="#294a8c"/><path d="M9 4l10 6-7 10" fill="none" stroke="#4266ab"/></svg></button>
      <button class="task open" aria-label="Fusion 360"><svg viewBox="0 0 32 34"><path d="M0 1h32v32H0z" fill="#e3f2fa"/><path d="M.5 1.500h31v31H.5z" fill="none" stroke="#bfdceb"/><path d="M10 4h13v5h-8v4h7v4h-7v8l-5 1z" fill="url(#gFus)"/><text x="18" y="31" class="tag">360</text></svg></button>
    </div>
    <div class="lang">
      <i class="divider"></i>
      <span>EN</span>
      <i class="line"></i>
      <svg width="16" height="16" viewBox="0 0 16 16"><rect x=".5" y="6.500" width="15" height="8" rx="1" fill="#eee" stroke="#777"/><path d="M2 9h12M2 11h12" stroke="#777" stroke-dasharray="2 1"/><path d="M4 13h8M3 5q0-3 4-2t8-2" fill="none" stroke="#777" stroke-width="1.500"/></svg>
      <i class="line"></i>
    </div>
    <div class="tray">
      <button class="more" aria-label="Show hidden icons"><svg width="6" height="9" viewBox="0 0 6 9"><path d="M.5 4 3 1.500 5.500 4M.5 8 3 5.500 5.500 8" fill="none" stroke="#000" stroke-width="1.300"/></svg></button>
      <svg width="17" height="17" viewBox="0 0 17 17"><path d="M1.500 1v15.500M2 2q4-2 7 1 3 2 7 0-1 4-3 6-3 1-5-1-3-1-6 0" fill="#f4f3f0" stroke="#666"/></svg>
      <svg width="17" height="17" viewBox="0 0 17 17"><path d="M5.500 4.500h10v8h-10z" fill="#eee" stroke="#555"/><path d="M8 15.500h6M11 13v2M1.500 1v4h4V1M3.500 5v8q0 2 3 2" fill="none" stroke="#555" stroke-width="1.300"/><path d="M2 2h3v3H2z" fill="#fff"/></svg>
      <svg width="17" height="17" viewBox="0 0 17 17"><path d="M1.500 6v5h3l4 4V2l-4 4z" fill="#f4f3f0" stroke="#666"/><path d="M11 5.500q2 3 0 6M13 3q3 5 0 10.500" fill="none" stroke="#888"/></svg>
      <time class="clock"><span>11:35</span><span>11.05.2016</span></time>
      <svg width="16" height="14" viewBox="0 0 16 14"><path d="M0 2h15l1 8H1z" fill="#1d4fa4"/><path d="M7 2h8l1 6z" fill="#4b84d6"/><path d="M1 10h4l1 3H2z" fill="#7dbb3a"/><path d="M6 11h10" stroke="#333" stroke-width="2"/></svg>
    </div>
  </footer>
</div>
<script src="grid.js"></script>
</body>
</html>
```

FILE: grid.js
```js
// Isometric ground grid: u runs along the red axis, v along the green axis.
const origin = { x: 888, y: 1021 };
const cell = { x: 55 / 3, y: 31.75 / 3 };
const uMin = -26, uMax = 60, vMin = -40, vMax = 30;

const point = (u, v) =>
  `${(origin.x + (u + v) * cell.x).toFixed(2)} ${(origin.y + (u - v) * cell.y).toFixed(2)}`;

let minor = '', major = '';
for (let u = uMin; u <= uMax; u++) {
  const d = `M${point(u, vMin)}L${point(u, vMax)}`;
  if (u % 5 === 0) major += d; else minor += d;
}
for (let v = vMin; v <= vMax; v++) {
  const d = `M${point(uMin, v)}L${point(uMax, v)}`;
  if (v % 5 === 0) major += d; else minor += d;
}
const edge = `M${point(uMin, vMin)}L${point(uMin, vMax)}L${point(uMax, vMax)}`;
document.getElementById('minor').setAttribute('d', minor);
document.getElementById('major').setAttribute('d', major);
document.getElementById('groundEdge').setAttribute('d', edge);
document.getElementById('groundShape').setAttribute('d', `${edge}L${point(uMax, vMin)}z`);
```

FILE: styles.css
```css
* { box-sizing: border-box; }

body {
  margin: 0;
  background: #ececec;
  color: #444;
  font: 11px/16px "Liberation Sans", Arial, sans-serif;
}

button {
  margin: 0;
  padding: 0;
  border: 0;
  background: none;
  color: inherit;
  font: inherit;
}

svg { display: block; flex: none; }
.defs { position: absolute; }

.app {
  display: grid;
  grid-template-rows: 1fr auto;
  min-height: 100vh;
}

.workspace {
  position: relative;
  overflow: hidden;
}

.scene {
  position: absolute;
  inset: 0;
  width: 100%;
  height: 100%;
}

.overlay {
  position: relative;
  display: flex;
  flex-direction: column;
  align-items: flex-start;
  gap: 4px;
  padding: 4px;
}

/* Toolbar */
.toolbar {
  display: grid;
  grid-template-columns: 103px 263px 70px 68px 93px 94px 74px 64px 59px 74px 70px;
  height: 60px;
  background: #dcdcdc;
  font: 11px/16px Roboto, sans-serif;
}

.tool {
  display: flex;
  flex-direction: column;
  align-items: center;
  padding: 4px 0 0;
  background: linear-gradient(#c6c6c6, #c6c6c6) left center / 1px 52px no-repeat;
}

.tool.model {
  display: grid;
  grid-template-columns: 6px 1fr;
  justify-items: center;
  align-content: start;
  padding: 4px 4px 0;
  background: #b5b5b5;
  color: #fff;
  font-weight: 700;
}

.grip { grid-row: 1 / 3; align-self: center; }
.tool.model .label { grid-column: 2; }
.tool:nth-child(2) { background: none; }

.icons {
  display: flex;
  align-items: center;
  height: 39px;
}

.icons.wide { gap: 11px; }
.icons.double { gap: 10px; }
.pressed { background: #5b88b1; }
.label { display: flex; align-items: center; gap: 4px; }

.caret {
  border: 3px solid transparent;
  border-top: 4px solid #333;
  border-bottom: 0;
}

.model .caret { border-top-color: #fff; }
.model .label { gap: 2px; }

/* Browser panel */
.browser { width: 300px; }

.browser-head {
  display: flex;
  align-items: center;
  gap: 7px;
  height: 25px;
  padding: 0 1px 0 4px;
  border: 1px solid #a8a8a8;
  background: #d1d1d1;
}

.browser-head h2 {
  flex: 1;
  margin: 0 0 0 5px;
  color: #666;
  font: 11px/16px Roboto, sans-serif;
}

.tree {
  display: grid;
  gap: 4px;
  margin: 5px 0 0;
  padding: 0;
  list-style: none;
}

.row { display: flex; align-items: center; gap: 7px; height: 20px; }
.root { padding-left: 16px; gap: 8px; }
.lv1 { padding-left: 35px; }
.lv2 { padding-left: 53px; }
.twist { width: 12px; }

.chip {
  display: flex;
  align-items: center;
  gap: 11px;
  height: 20px;
  padding: 0 11px 0 3px;
  background: #cdcdcd;
}

.chip > svg:last-of-type { margin-right: 3px; }

.root .chip { gap: 4px; padding: 0 8px 0 2px; }
.root .chip > svg { margin: 0; }

.picked {
  display: flex;
  align-items: center;
  gap: 12px;
  height: 16px;
  padding: 0 13px 0 2px;
  background: #828282;
  color: #fff;
}

/* View cube */
.cube { position: absolute; top: 0; right: 0; }
.face { fill: #a2a6ac; font: 700 8px "Liberation Sans", Arial, sans-serif; }

/* Notification flyout */
.flyout {
  position: absolute;
  right: 102px;
  bottom: 0;
  width: 146px;
  border: 1px solid #000;
  background: #fff;
  font: 11px/16px "DejaVu Sans Condensed", "DejaVu Sans", sans-serif;
}

.flyout-icons {
  display: grid;
  grid-template-columns: repeat(4, 16px);
  gap: 16px;
  padding: 13px 15px 13px;
}

.aol { fill: #fff; font: 700 8px "Liberation Sans", sans-serif; }

.customize {
  display: block;
  padding: 13px 0 12px;
  background: #d4d0c8;
  color: #00008b;
  text-align: center;
  text-decoration: none;
}

/* Taskbar */
.taskbar {
  display: flex;
  align-items: center;
  height: 44px;
  padding: 2px 3px 0 2px;
  border-top: 1px solid #fff;
  background: #d4d0c8;
  box-shadow: 0 -1px #d4d0c8;
  color: #000;
  font: 11px/16px "DejaVu Sans Condensed", "DejaVu Sans", sans-serif;
}

.start, .open {
  border: 1px solid;
  border-color: #fff #404040 #404040 #fff;
  box-shadow: inset -1px -1px #808080;
}

.start {
  display: flex;
  align-items: center;
  gap: 1px;
  width: 52px;
  height: 38px;
  padding-left: 1px;
  font-weight: 700;
}

.divider {
  width: 3px;
  height: 34px;
  border: 1px solid;
  border-color: #fff #808080 #808080 #fff;
}

.start + .divider { margin: 0 8px 0 7px; }
.tasks { display: flex; flex: 1; gap: 2px; }

.task {
  display: grid;
  place-items: center;
  width: 48px;
  height: 38px;
}

.task svg { width: 32px; height: 34px; }
.tag { fill: #1b96d4; font: 700 8px "Liberation Sans", sans-serif; }

.lang { display: flex; align-items: center; gap: 6px; padding-right: 3px; }
.lang span { margin-left: 3px; }
.line { width: 1px; height: 22px; background: #808080; }

.tray {
  display: flex;
  align-items: center;
  gap: 7px;
  height: 38px;
  border: 1px solid;
  border-color: #808080 #fff #fff #808080;
}

.more {
  display: grid;
  place-items: center;
  width: 16px;
  height: 36px;
  border: 1px solid;
  border-color: #808080 #fff #fff #808080;
}

.clock { display: grid; margin-left: 3px; text-align: center; }
```
